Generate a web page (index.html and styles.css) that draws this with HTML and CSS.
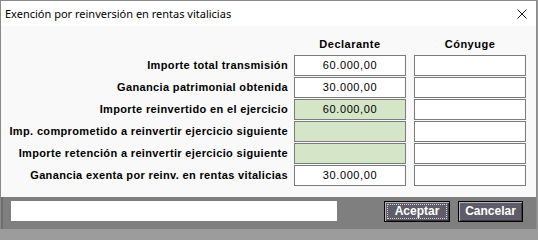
FILE: index.html
```html
<!DOCTYPE html>
<html lang="es">
<head>
<meta charset="utf-8">
<title>Exención por reinversión en rentas vitalicias</title>
<link rel="stylesheet" href="styles.css">
</head>
<body>
<div class="window">
  <div class="titlebar">
    <span class="title">Exención por reinversión en rentas vitalicias</span>
    <svg class="close" width="10" height="10" viewBox="0 0 10 10"><path d="M0.5 0.5 L9.5 9.5 M9.5 0.5 L0.5 9.5" stroke="#1a1a1a" stroke-width="1" fill="none"/></svg>
  </div>
  <div class="content">
    <div class="grid">
      <div></div>
      <div class="colhead">Declarante</div>
      <div class="colhead">Cónyuge</div>

      <div class="label">Importe total transmisión</div>
      <div class="field">60.000,00</div>
      <div class="field"></div>

      <div class="label">Ganancia patrimonial obtenida</div>
      <div class="field">30.000,00</div>
      <div class="field"></div>

      <div class="label">Importe reinvertido en el ejercicio</div>
      <div class="field green">60.000,00</div>
      <div class="field"></div>

      <div class="label">Imp. comprometido a reinvertir ejercicio siguiente</div>
      <div class="field green"></div>
      <div class="field"></div>

      <div class="label">Importe retención a reinvertir ejercicio siguiente</div>
      <div class="field green"></div>
      <div class="field"></div>

      <div class="label">Ganancia exenta por reinv. en rentas vitalicias</div>
      <div class="field">30.000,00</div>
      <div class="field"></div>
    </div>
  </div>
  <div class="footer">
    <div class="status"></div>
    <button class="btn btn-focus">Aceptar</button>
    <button class="btn">Cancelar</button>
  </div>
</div>
</body>
</html>
```

FILE: styles.css
```css
html, body {
  margin: 0;
  padding: 0;
}
body {
  background: #9c9c9c;
  width: 538px;
  height: 229px;
  overflow: hidden;
}
.window {
  width: 535px;
  height: 228px;
  border: 1px solid #8a8a8a;
  border-bottom: none;
  background: #f9f9f9;
  display: flex;
  flex-direction: column;
}
.titlebar {
  height: 25px;
  background: #ffffff;
  display: flex;
  align-items: center;
  padding-left: 4px;
  padding-right: 9px;
}
.title {
  font-family: "Noto Sans", "Open Sans", sans-serif;
  font-size: 11px;
  color: #000;
  flex: 1;
  margin-top: -1px;
}
.close {
  display: block;
  margin-top: 1px;
}
.content {
  flex: 1;
  padding: 8px 10px 0 0;
}
.grid {
  display: grid;
  grid-template-columns: 1fr 112px 112px;
  grid-template-rows: 20px repeat(6, 21px);
  column-gap: 8px;
  row-gap: 1px;
  font-family: "Liberation Sans", Arial, sans-serif;
}
.colhead {
  font-weight: bold;
  font-size: 11px;
  letter-spacing: 0.5px;
  text-align: center;
  line-height: 20px;
  color: #000;
}
.label {
  font-weight: bold;
  font-size: 11px;
  letter-spacing: 0.35px;
  text-align: right;
  line-height: 21px;
  margin-right: -2px;
  white-space: nowrap;
  color: #000;
}
.field {
  box-sizing: border-box;
  border: 1px solid #7b7b7b;
  background: #ffffff;
  font-size: 11px;
  letter-spacing: 0.6px;
  text-align: center;
  line-height: 19px;
  color: #000;
}
.field.green {
  background: #d5e6c8;
}
.footer {
  height: 28px;
  background: #7f7f7f;
  display: flex;
  align-items: flex-start;
  padding: 4px 13px 0 10px;
  box-shadow: inset 2px 0 0 #6e6e6e;
}
.status {
  width: 326px;
  height: 20px;
  background: #ffffff;
  margin-right: auto;
}
.btn {
  box-sizing: border-box;
  height: 21px;
  margin: 0 0 0 8px;
  padding: 0;
  border: 1px solid #000;
  background: #5e5c68;
  box-shadow: inset 1px 1px 0 #b4b3bb, inset -1px -1px 0 #3b3a43;
  color: #ffffff;
  font-family: "Liberation Sans", Arial, sans-serif;
  font-weight: bold;
  font-size: 12px;
  line-height: 19px;
  width: 65px;
}
.btn-focus {
  width: 66px;
  outline: 1px dotted #d8d8d8;
  outline-offset: -4px;
}
```
